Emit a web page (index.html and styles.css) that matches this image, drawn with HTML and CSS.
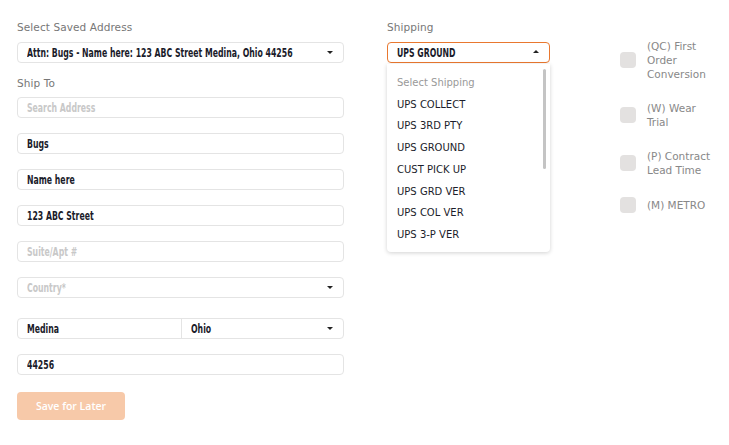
FILE: index.html
```html
<!DOCTYPE html>
<html>
<head>
<meta charset="utf-8">
<link rel="stylesheet" href="styles.css">
</head>
<body>
<div class="page">
  <div class="col-left">
    <div class="label">Select Saved Address</div>
    <div class="field select gap-label">
      <span class="val">Attn: Bugs - Name here: 123 ABC Street Medina, Ohio 44256</span>
      <span class="caret down"></span>
    </div>
    <div class="label shipto">Ship To</div>
    <div class="field gap-label-sm"><span class="ph">Search Address</span></div>
    <div class="field gap"><span class="val">Bugs</span></div>
    <div class="field gap"><span class="val">Name here</span></div>
    <div class="field gap"><span class="val">123 ABC Street</span></div>
    <div class="field gap"><span class="ph">Suite/Apt #</span></div>
    <div class="field select gap"><span class="ph">Country*</span><span class="caret down"></span></div>
    <div class="field split gap-lg">
      <div class="part city"><span class="val">Medina</span></div>
      <div class="part state"><span class="val">Ohio</span><span class="caret down"></span></div>
    </div>
    <div class="field gap"><span class="val">44256</span></div>
    <button class="btn">Save for Later</button>
  </div>
  <div class="col-mid">
    <div class="label">Shipping</div>
    <div class="field select open gap-label">
      <span class="val">UPS GROUND</span>
      <span class="caret up"></span>
    </div>
    <div class="menu">
      <ul class="opts">
        <li class="muted">Select Shipping</li>
        <li>UPS COLLECT</li>
        <li>UPS 3RD PTY</li>
        <li>UPS GROUND</li>
        <li>CUST PICK UP</li>
        <li>UPS GRD VER</li>
        <li>UPS COL VER</li>
        <li>UPS 3-P VER</li>
      </ul>
      <div class="thumb"></div>
    </div>
  </div>
  <div class="col-right">
    <div class="check"><span class="box"></span><span class="ctext">(QC) First<br>Order<br>Conversion</span></div>
    <div class="check"><span class="box"></span><span class="ctext">(W) Wear<br>Trial</span></div>
    <div class="check"><span class="box"></span><span class="ctext">(P) Contract<br>Lead Time</span></div>
    <div class="check"><span class="box"></span><span class="ctext">(M) METRO</span></div>
  </div>
</div>
</body>
</html>
```

FILE: styles.css
```css
* { box-sizing: border-box; }
html, body { margin: 0; padding: 0; background: #fff; }
body { font-family: "DejaVu Sans", sans-serif; }

.page {
  display: flex;
  align-items: flex-start;
  padding: 20px 0 0 17px;
}

.col-left { width: 327px; display: flex; flex-direction: column; align-items: flex-start; }
.col-mid { width: 163px; margin-left: 43px; }
.col-right { margin-left: 70px; margin-top: 19px; display: flex; flex-direction: column; gap: 20px; }

.label {
  font-size: 10.5px;
  line-height: 14px;
  color: #777;
  letter-spacing: 0.1px;
}
.shipto { margin-top: 13px; }

.field {
  width: 100%;
  height: 21px;
  border: 1px solid #e4e4e4;
  border-radius: 4px;
  display: flex;
  align-items: center;
  padding: 0 10px 0 9px;
  font-family: "DejaVu Sans Condensed", sans-serif;
  font-weight: bold;
  font-size: 12px;
  position: relative;
  overflow: hidden;
}
.gap-label { margin-top: 8px; }
.gap-label-sm { margin-top: 7px; }
.gap { margin-top: 15px; }
.gap-lg { margin-top: 20px; }

.val, .ph {
  display: inline-block;
  white-space: nowrap;
  transform: scaleX(0.72);
  transform-origin: left center;
  flex: none;
}
.val { color: #1a1b2a; }
.ph { color: #c8c8c8; }

.caret {
  position: absolute;
  right: 10px;
  top: 8px;
  width: 0; height: 0;
  border-left: 3px solid transparent;
  border-right: 3px solid transparent;
}
.caret.down { border-top: 3px solid #222; }
.caret.up { border-bottom: 3px solid #222; top: 7px; }

.split { padding: 0; }
.part { height: 100%; display: flex; align-items: center; position: relative; }
.city { width: 164px; padding-left: 9px; border-right: 1px solid #e4e4e4; }
.state { flex: 1; padding: 0 10px 0 9px; }

.btn {
  margin-top: 17px;
  width: 108px;
  height: 28px;
  border: none;
  border-radius: 4px;
  background: #f7c9a9;
  color: #fff;
  font-family: "Open Sans", sans-serif;
  font-weight: 600;
  font-size: 10.5px;
  padding: 0;
}

.open { border-color: #e9782f; }
.menu {
  position: relative;
  margin-top: 1px;
  height: 188px;
  overflow: hidden;
  border-radius: 0 0 4px 4px;
  box-shadow: 0 1px 4px rgba(0,0,0,0.18);
  background: #fff;
}
.opts {
  list-style: none;
  margin: 0;
  padding: 8px 0 0 10px;
}
.opts li {
  font-size: 10px;
  line-height: 21.7px;
  color: #1c1d2b;
  white-space: nowrap;
}
.opts li.muted { color: #999; }
.thumb {
  position: absolute;
  right: 4px;
  top: 5px;
  width: 3px;
  height: 100px;
  border-radius: 2px;
  background: #c4c4c4;
}

.check { display: flex; align-items: center; }
.box {
  width: 16px;
  height: 16px;
  border-radius: 4px;
  background: #e3e1e0;
  flex: none;
}
.ctext {
  margin-left: 11px;
  font-size: 10.5px;
  line-height: 14px;
  color: #888;
}
```
